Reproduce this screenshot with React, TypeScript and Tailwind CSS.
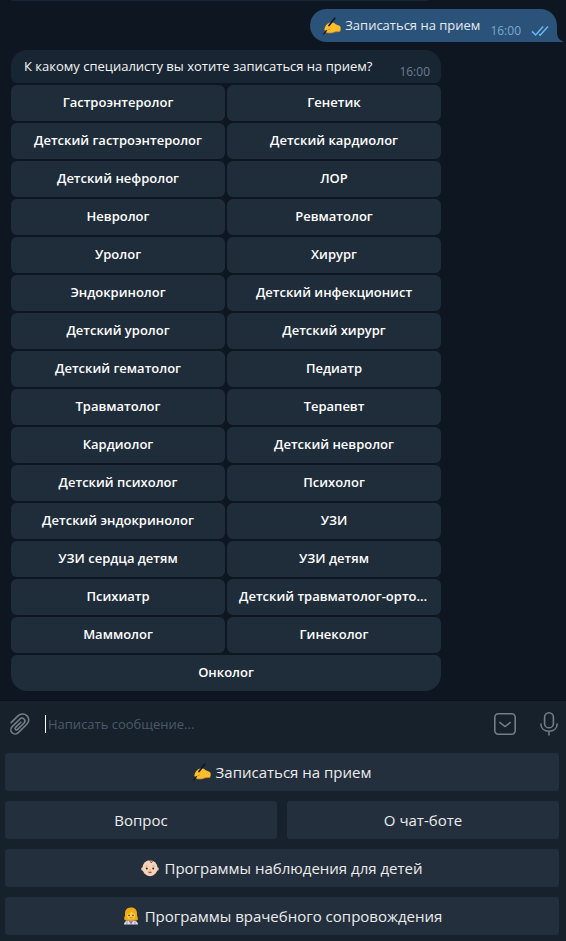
import { useState } from 'react'

const specialists = [
  'Гастроэнтеролог',
  'Генетик',
  'Детский гастроэнтеролог',
  'Детский кардиолог',
  'Детский нефролог',
  'ЛОР',
  'Невролог',
  'Ревматолог',
  'Уролог',
  'Хирург',
  'Эндокринолог',
  'Детский инфекционист',
  'Детский уролог',
  'Детский хирург',
  'Детский гематолог',
  'Педиатр',
  'Травматолог',
  'Терапевт',
  'Кардиолог',
  'Детский невролог',
  'Детский психолог',
  'Психолог',
  'Детский эндокринолог',
  'УЗИ',
  'УЗИ сердца детям',
  'УЗИ детям',
  'Психиатр',
  'Детский травматолог-ортопед',
  'Маммолог',
  'Гинеколог',
]

function WritingHand() {
  return (
    <svg viewBox="0 0 18 18" className="h-[18px] w-[18px] shrink-0" aria-hidden="true">
      <path
        d="M1.4 12.4 C1.6 9.4 3.8 6.4 7 5.4 C9.4 4.8 11.4 5.6 12.2 7 L16.8 9 C18 9.8 18 13.6 16.8 14.4 L12.2 14.8 C9.8 16 6 16.4 4.2 15.8 C2.6 15.8 2 14.6 2.8 13.8 C1.9 13.8 1.4 13.2 1.4 12.4 Z"
        fill="#fbbf2d"
      />
      <path
        d="M2.8 13.8 L6.6 12 M4.2 15.8 C7 16.3 10 15.8 12.2 14.8 C14 14.7 15.6 14.6 16.8 14.4"
        fill="none"
        stroke="#d28d1a"
        strokeWidth="0.8"
        strokeLinecap="round"
      />
      <path d="M0.7 17 L3.4 13.6" stroke="#11161c" strokeWidth="1.2" strokeLinecap="round" />
      <path d="M6 8.6 L11.8 1.2" stroke="#11161c" strokeWidth="1.6" strokeLinecap="round" />
    </svg>
  )
}

function Baby() {
  return (
    <svg viewBox="0 0 18 18" className="h-[18px] w-[18px] shrink-0" aria-hidden="true">
      <circle cx="1.8" cy="10" r="1.7" fill="#e9b99b" />
      <circle cx="16.2" cy="10" r="1.7" fill="#e9b99b" />
      <ellipse cx="9" cy="9.2" rx="7.6" ry="8" fill="#f5d3ba" />
      <path
        d="M8.6 1.2 C11 0.4 12.2 2.2 10.6 3.4 C10 3.8 9.3 3.4 9.5 2.8"
        fill="none"
        stroke="#5b3a2a"
        strokeWidth="1"
        strokeLinecap="round"
      />
      <circle cx="5.8" cy="9.4" r="1" fill="#3c2a24" />
      <circle cx="12.2" cy="9.4" r="1" fill="#3c2a24" />
      <path d="M4.6 7.2 L6.4 6.8 M11.6 6.8 L13.4 7.2" stroke="#b98263" strokeWidth="0.7" />
      <path d="M8.2 11 H9.8" stroke="#d99c7d" strokeWidth="0.9" />
      <path d="M6.6 12.8 C7.8 14.6 10.2 14.6 11.4 12.8 Z" fill="#b5473c" />
    </svg>
  )
}

function Doctor() {
  return (
    <svg viewBox="0 0 18 18" className="h-[18px] w-[18px] shrink-0" aria-hidden="true">
      <path
        d="M9 0.6 C4.8 0.4 2.8 3.4 3.1 7 C3.2 9.4 1.6 10.8 2.4 12.6 C3.4 14.2 6 13.6 7 13 L11.4 13 C13 13.8 15 13.8 15.8 12.4 C16.4 10.8 14.8 9.2 15 7 C15.2 3.2 13 0.6 9 0.6 Z"
        fill="#efab16"
      />
      <path d="M2 17.6 C2 14.8 4.4 13.6 7 13.2 H11 C13.6 13.6 16 14.8 16 17.6 Z" fill="#d9dfe8" />
      <path d="M6.4 13.2 L9 17.6 L11.6 13.2 Z" fill="#b455b8" />
      <path d="M7.4 11 H10.6 V13.2 L9 15 L7.4 13.2 Z" fill="#e89f13" />
      <path
        d="M4.8 7.4 C7 7.2 8.8 6 9.6 4.2 C10.2 5.8 11.6 6.8 13.2 7.2 C13.2 10.4 11.2 12.4 9 12.4 C6.8 12.4 4.8 10.4 4.8 7.4 Z"
        fill="#ffd23e"
      />
      <circle cx="7" cy="8.4" r="0.8" fill="#53351b" />
      <circle cx="11" cy="8.4" r="0.8" fill="#53351b" />
      <path d="M7.5 10.4 C8.4 11.2 9.6 11.2 10.5 10.4" fill="none" stroke="#a5432b" strokeWidth="0.8" />
      <path d="M5 14.4 V17.6 M13 14.4 V17.6" stroke="#6c7b8a" strokeWidth="0.7" />
    </svg>
  )
}

function ReadTicks() {
  return (
    <svg viewBox="0 0 18 12" className="h-3 w-[18px]" fill="none" stroke="#6ab7f5" strokeWidth="1.5" aria-label="Прочитано">
      <path d="M1 6.4 L4.6 10 L12.2 1.6" />
      <path d="M8 9 L9.2 10.2 L17 1.6" />
    </svg>
  )
}

function PaperclipIcon() {
  return (
    <svg
      viewBox="0 0 20 22"
      className="h-[22px] w-5"
      fill="none"
      stroke="#727f87"
      strokeWidth="1.6"
      strokeLinecap="round"
      aria-hidden="true"
    >
      <path d="M1.2 9.6 L8 2.9 C10.4 0.5 14.2 0.3 16.8 2.6 C19.4 4.9 19.3 8.6 17 11 L8.6 19.4 C6.6 21.4 3.8 21.5 2.1 19.8 C0.4 18.1 0.5 15.3 2.4 13.4 L9.7 6.2 C11 4.9 12.8 4.8 14 6 C15.2 7.2 15.1 8.9 13.9 10.2 L7.6 16.4 C7 17 6 17 5.5 16.4 C4.9 15.8 5 15 5.6 14.4 L10.8 9.2" />
    </svg>
  )
}

function CommandsIcon() {
  return (
    <svg viewBox="0 0 22 22" className="h-[22px] w-[22px]" fill="none" stroke="#727f87" strokeWidth="1.6" aria-hidden="true">
      <rect x="0.8" y="0.8" width="20.4" height="20.4" rx="3.6" />
      <path d="M5.4 9.2 L11 13.6 L16.6 9.2" />
    </svg>
  )
}

function MicIcon() {
  return (
    <svg viewBox="0 0 18 24" className="h-6 w-[18px]" fill="none" stroke="#727f87" strokeWidth="1.6" aria-hidden="true">
      <rect x="4.6" y="0.8" width="8.8" height="15" rx="4.4" />
      <path d="M0.8 11.4 C0.8 16.4 4.4 19.2 9 19.2 C13.6 19.2 17.2 16.4 17.2 11.4 M9 19.2 V23.4" />
    </svg>
  )
}

const inlineButton =
  'h-9 truncate rounded-md bg-[#1f2c39] px-3 pb-px text-[13px] font-semibold text-white hover:bg-[#263543]'
const replyButton =
  'flex h-[38px] items-center justify-center gap-[5px] rounded-[3px] bg-[#242f3d] text-[15px] font-medium text-[#ececec] hover:bg-[#2b394a]'

export default function App() {
  const [message, setMessage] = useState('')

  return (
    <div className="flex min-h-screen flex-col bg-[#0e1621] font-['Open_Sans','Noto_Sans',sans-serif]">
      <main className="flex flex-1 flex-col pr-[3px] pb-[9px] pl-[11px]">
        <div className="h-px w-[417px] max-w-full rounded-b-sm bg-[#182533]" />

        <div className="mt-2 flex items-end self-end">
          <div className="flex h-[33px] items-center rounded-l-[17px] rounded-tr-[17px] bg-[#2b5278] pr-2 pl-[13px] text-[13px] text-[#e4ecf2]">
            <WritingHand />
            <span className="ml-1">Записаться на прием</span>
            <span className="mt-2.5 ml-2.5 text-[12px] text-[#7da8d3]">16:00</span>
            <span className="mt-2.5 ml-2.5">
              <ReadTicks />
            </span>
          </div>
          <svg viewBox="0 0 6 10" className="h-2.5 w-1.5" aria-hidden="true">
            <path d="M0 0 C0 5 2 8 6 9.4 V10 H0 Z" fill="#2b5278" />
          </svg>
        </div>

        <section className="mt-2 w-[430px] max-w-full">
          <div className="flex h-[33px] items-center justify-between rounded-t-2xl rounded-b-md bg-[#182533] pr-[11px] pl-[13px] text-[13px] text-[#f5f5f5]">
            <p>К какому специалисту вы хотите записаться на прием?</p>
            <span className="mt-2.5 text-[12px] text-[#6d7f8f]">16:00</span>
          </div>
          <div className="mt-0.5 grid grid-cols-2 gap-0.5">
            {specialists.map((name) => (
              <button key={name} type="button" className={inlineButton}>
                {name}
              </button>
            ))}
            <button type="button" className={`${inlineButton} col-span-2 rounded-b-2xl`}>
              Онколог
            </button>
          </div>
        </section>
      </main>

      <footer className="border-t border-[#0b121a] bg-[#17212b] pb-1.5">
        <div className="flex h-[52px] items-center pr-2 pb-1.5 pl-2.5">
          <button type="button" aria-label="Прикрепить файл">
            <PaperclipIcon />
          </button>
          <input
            autoFocus
            aria-label="Сообщение"
            placeholder="Написать сообщение..."
            value={message}
            onChange={(e) => setMessage(e.target.value)}
            className="ml-[15px] h-[18px] min-w-0 flex-1 border-l border-white bg-transparent pt-px pl-0.5 text-[13px] text-white caret-transparent outline-none placeholder:text-[#4c5a67]"
          />
          <button type="button" aria-label="Команды бота">
            <CommandsIcon />
          </button>
          <button type="button" aria-label="Голосовое сообщение" className="ml-6">
            <MicIcon />
          </button>
        </div>

        <div className="grid grid-cols-2 gap-2.5 pr-[7px] pl-[5px]">
          <button type="button" className={`${replyButton} col-span-2`}>
            <WritingHand />
            Записаться на прием
          </button>
          <button type="button" className={replyButton}>
            Вопрос
          </button>
          <button type="button" className={replyButton}>
            О чат-боте
          </button>
          <button type="button" className={`${replyButton} col-span-2`}>
            <Baby />
            Программы наблюдения для детей
          </button>
          <button type="button" className={`${replyButton} col-span-2`}>
            <Doctor />
            Программы врачебного сопровождения
          </button>
        </div>
      </footer>
    </div>
  )
}
